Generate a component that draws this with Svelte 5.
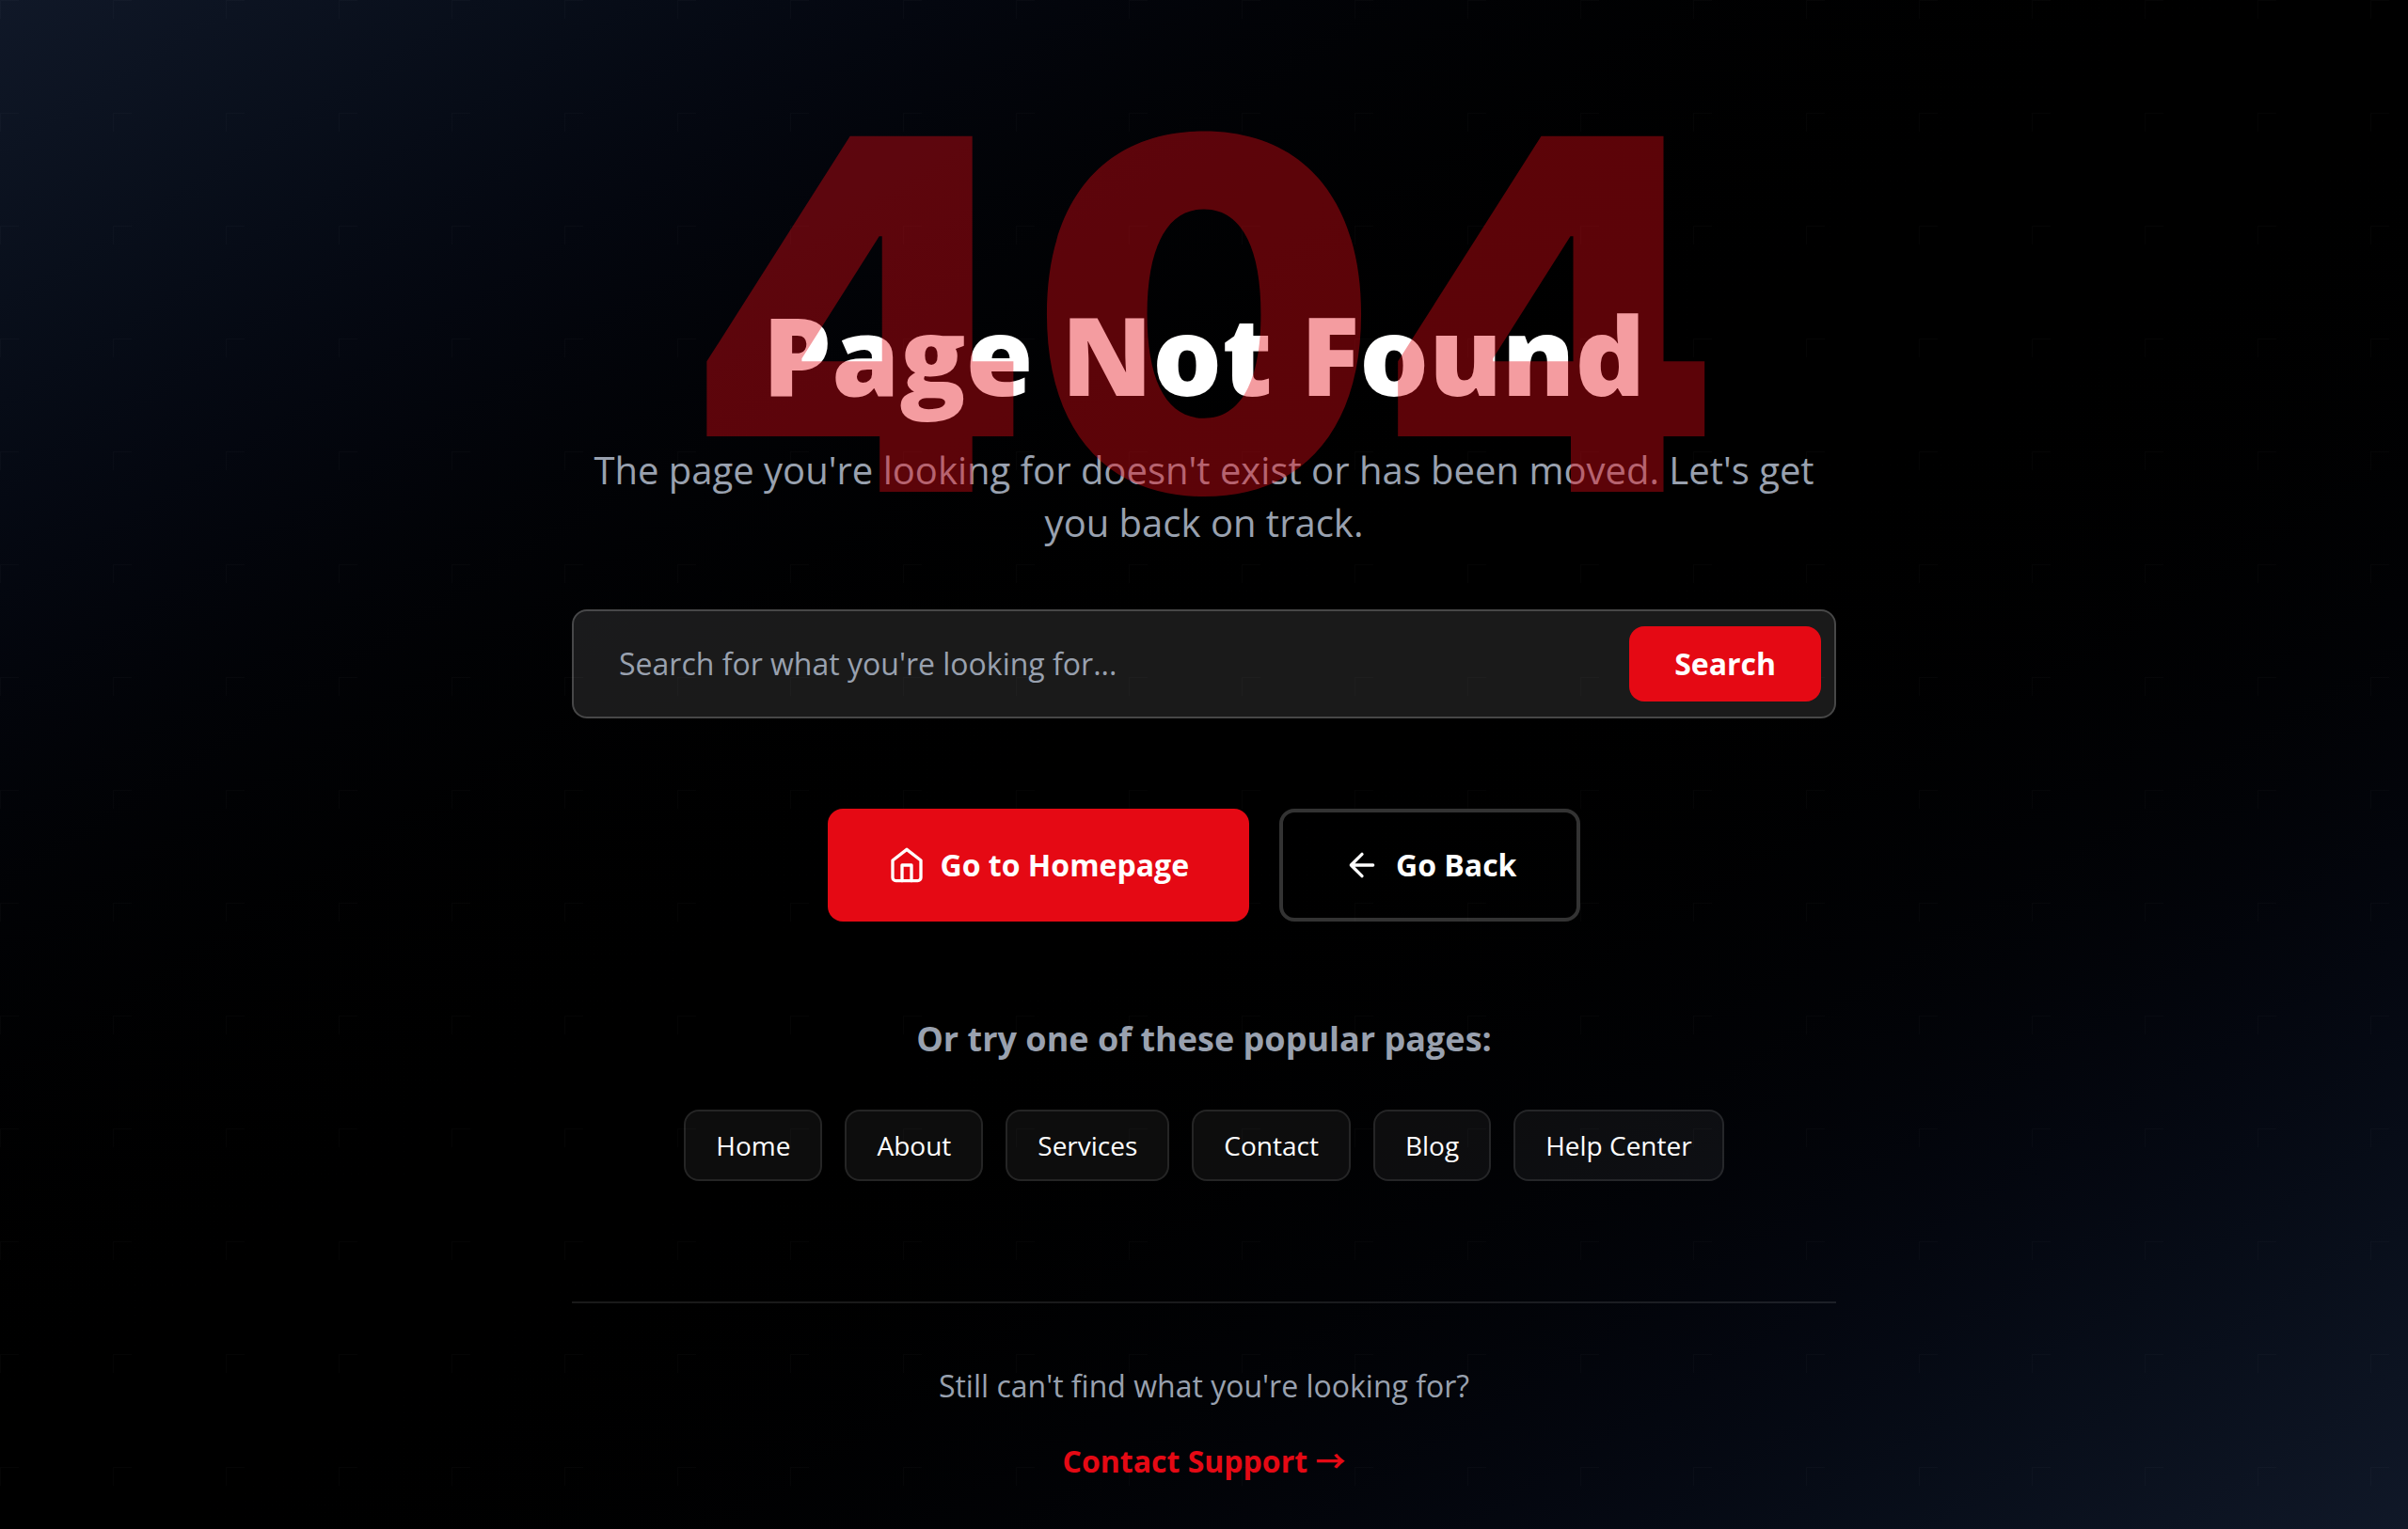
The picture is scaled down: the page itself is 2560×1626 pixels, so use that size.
<script lang="ts">
  const pages = ['Home', 'About', 'Services', 'Contact', 'Blog', 'Help Center'];
  let query = $state('');
</script>

<main class="page">
  <svg class="pattern" aria-hidden="true">
    <defs>
      <pattern id="grid" width="120" height="120" patternUnits="userSpaceOnUse">
        <path d="M20 0H0V20" fill="none" stroke="#fff" stroke-width="2" />
      </pattern>
    </defs>
    <rect width="100%" height="100%" fill="url(#grid)" />
  </svg>

  <div class="content">
    <header class="hero">
      <h1>Page Not Found</h1>
      <p>The page you're looking for doesn't exist or has been moved. Let's get you back on track.</p>
      <div class="code" aria-hidden="true">404</div>
    </header>

    <form class="search" onsubmit={(e) => e.preventDefault()}>
      <input type="text" bind:value={query} aria-label="Search" placeholder="Search for what you're looking for..." />
      <button type="submit">Search</button>
    </form>

    <div class="actions">
      <a class="action primary" href="/">
        <svg viewBox="0 0 24 24" width="40" height="40" aria-hidden="true">
          <path d="M3 9l9-7 9 7v11a2 2 0 0 1-2 2H5a2 2 0 0 1-2-2z" />
          <path d="M9 22V12h6v10" />
        </svg>
        Go to Homepage
      </a>
      <button class="action outline" type="button" onclick={() => history.back()}>
        <svg viewBox="0 0 24 24" width="40" height="40" aria-hidden="true">
          <path d="M19 12H5M12 19l-7-7 7-7" />
        </svg>
        Go Back
      </button>
    </div>

    <nav class="popular" aria-labelledby="popular-title">
      <h2 id="popular-title">Or try one of these popular pages:</h2>
      <ul>
        {#each pages as page}
          <li><a href="#{page.toLowerCase().replace(' ', '-')}">{page}</a></li>
        {/each}
      </ul>
    </nav>

    <footer>
      <p>Still can't find what you're looking for?</p>
      <a href="#support">Contact Support <span class="arrow">→</span></a>
    </footer>
  </div>
</main>

<style>
  :global(body) {
    margin: 0;
    background: #000;
  }

  .page {
    position: relative;
    box-sizing: border-box;
    min-height: 100vh;
    padding: 128px 32px 48px;
    overflow: hidden;
    background: linear-gradient(to bottom right in oklab, #101828, #000, #101828);
    color: #fff;
    font-family: 'Open Sans', 'Noto Sans', sans-serif;
    font-size: 32px;
    line-height: 48px;
  }

  .pattern {
    position: absolute;
    inset: 0;
    width: 100%;
    height: 100%;
    opacity: 0.02;
  }

  .content {
    position: relative;
    max-width: 1344px;
    margin: 0 auto;
    text-align: center;
  }

  .hero {
    position: relative;
    padding-top: 188px;
  }

  .code {
    position: absolute;
    top: 0;
    left: 0;
    right: 0;
    color: #e50914;
    opacity: 0.4;
    font-family: Inter, 'Open Sans', sans-serif;
    font-size: 520px;
    font-weight: 900;
    line-height: 412px;
    pointer-events: none;
  }

  h1 {
    margin: 0 0 36px;
    font-size: 116px;
    font-weight: 800;
    line-height: 120px;
  }

  .hero p {
    margin: 0;
    color: #99a1af;
    font-size: 40px;
    line-height: 56px;
  }

  .search {
    display: flex;
    align-items: center;
    margin: 64px 0 96px;
    padding: 16px 14px 16px 48px;
    border: 2px solid rgb(255 255 255 / 0.2);
    border-radius: 16px;
    background: rgb(255 255 255 / 0.1);
  }

  .search input {
    flex: 1;
    min-width: 0;
    padding: 0;
    border: 0;
    outline: 0;
    background: none;
    color: #fff;
    font: inherit;
  }

  .search input::placeholder {
    color: #99a1af;
    opacity: 1;
  }

  .search button {
    padding: 16px 48px;
    border: 0;
    border-radius: 16px;
    background: #e50914;
    color: #fff;
    font: inherit;
    font-weight: 700;
  }

  .actions {
    display: flex;
    flex-wrap: wrap;
    justify-content: center;
    gap: 32px;
  }

  .action {
    display: flex;
    align-items: center;
    gap: 16px;
    padding: 32px 64px;
    border: 0;
    border-radius: 16px;
    background: #e50914;
    color: #fff;
    font: inherit;
    font-weight: 700;
    text-decoration: none;
  }

  .action.outline {
    border: 4px solid rgb(255 255 255 / 0.2);
    background: none;
  }

  .action svg {
    fill: none;
    stroke: currentColor;
    stroke-width: 2;
    stroke-linecap: round;
    stroke-linejoin: round;
  }

  .popular {
    margin-top: 96px;
  }

  h2 {
    margin: 0 0 46px;
    color: #99a1af;
    font-size: 36px;
    font-weight: 700;
    line-height: 58px;
  }

  ul {
    display: flex;
    flex-wrap: wrap;
    justify-content: center;
    gap: 24px;
    margin: 0;
    padding: 0;
    list-style: none;
  }

  li a {
    display: block;
    padding: 16px 32px;
    border: 2px solid rgb(255 255 255 / 0.1);
    border-radius: 16px;
    background: rgb(255 255 255 / 0.05);
    color: #fff;
    font-size: 28px;
    line-height: 40px;
    text-decoration: none;
  }

  footer {
    margin-top: 128px;
    padding-top: 64px;
    border-top: 2px solid rgb(255 255 255 / 0.1);
  }

  footer p {
    margin: 0 0 32px;
    color: #99a1af;
  }

  footer a {
    color: #e50914;
    font-weight: 700;
    text-decoration: none;
  }

  .arrow {
    font-family: 'Noto Sans CJK SC', sans-serif;
    line-height: 1;
  }
</style>
